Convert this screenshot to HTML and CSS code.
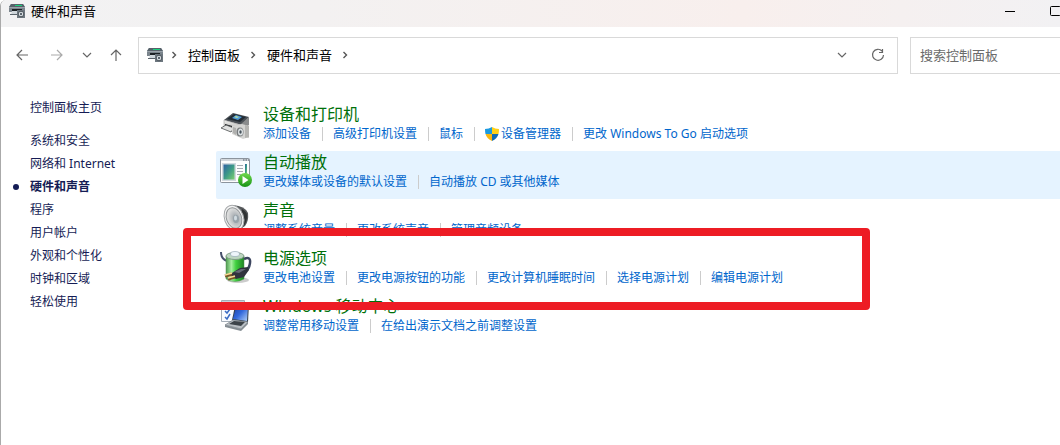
FILE: index.html
```html
<!DOCTYPE html>
<html lang="zh-CN">
<head>
    <meta charset="UTF-8">
    <meta name="viewport" content="width=device-width, initial-scale=1.0">
    <title>硬件和声音</title>
    <link rel="stylesheet" href="styles.css">
</head>
<body>
    <!-- Shared symbols -->
    <svg class="symbols" aria-hidden="true">
        <symbol id="hardware" viewBox="0 0 16 16">
            <path d="M2 1h12l2 3v3H0V4z" fill="#9aa3aa"/>
            <path d="M2 1h12l2 3H0z" fill="#56616a"/>
            <path d="M6 2h7v1H6z" fill="#19d27c"/>
            <path d="M0 5h16v4H0z" fill="#7b858d"/>
            <path d="M3 6h10v2H3z" fill="#1b2024"/>
            <path d="M3 8h6v4H2z" fill="#cfd6db"/>
            <path d="M1 11h7v1H1z" fill="#59636b"/>
            <path d="M8 7h8v8H8z" fill="#6d777f"/>
            <circle cx="12" cy="11" r="2.800" fill="#dfe4e8" stroke="#4b545b"/>
            <circle cx="12" cy="11" r="1.200" fill="#58636b"/>
        </symbol>
        <symbol id="crumb" viewBox="0 0 6 8">
            <path d="M1.500 1l3 3-3 3" fill="none" stroke="#555" stroke-width="1.400"/>
        </symbol>
        <symbol id="down" viewBox="0 0 10 6">
            <path d="M1 1l4 4 4-4" fill="none" stroke="currentColor" stroke-width="1.200"/>
        </symbol>
    </svg>

    <div class="window">
        <header class="titlebar">
            <svg class="icon16"><use href="#hardware"/></svg>
            <h1>硬件和声音</h1>
            <div class="window-buttons">
                <button aria-label="最小化"><svg width="10" height="10" viewBox="0 0 10 10"><path d="M0 5.500h10" stroke="#000"/></svg></button>
                <button aria-label="最大化"><svg width="12" height="10" viewBox="0 0 12 10"><rect x=".5" y=".5" width="10" height="9" rx="1" fill="none" stroke="#000"/></svg></button>
            </div>
        </header>

        <div class="toolbar">
            <nav class="history">
                <button aria-label="后退"><svg width="12" height="12" viewBox="0 0 12 12"><path d="M12 6H1M6 1L1 6l5 5"/></svg></button>
                <button class="disabled" aria-label="前进"><svg width="12" height="12" viewBox="0 0 12 12"><path d="M0 6h11M6 1l5 5-5 5"/></svg></button>
                <button class="narrow" aria-label="最近的位置"><svg width="10" height="6"><use href="#down"/></svg></button>
                <button class="up" aria-label="上移"><svg width="12" height="12" viewBox="0 0 12 12"><path d="M6 12V1M1 6l5-5 5 5"/></svg></button>
            </nav>
            <div class="address">
                <svg class="icon16"><use href="#hardware"/></svg>
                <svg class="crumb"><use href="#crumb"/></svg>
                <a href="#">控制面板</a>
                <svg class="crumb"><use href="#crumb"/></svg>
                <a href="#">硬件和声音</a>
                <svg class="crumb"><use href="#crumb"/></svg>
                <div class="address-buttons">
                    <button aria-label="以前的位置"><svg width="10" height="6"><use href="#down"/></svg></button>
                    <button aria-label="刷新"><svg width="14" height="14" viewBox="0 0 14 14"><path d="M11 3a5.500 5.500 0 1 0 1.500 4M11.500 1v3.500H8"/></svg></button>
                </div>
            </div>
            <input class="search" type="text" placeholder="搜索控制面板" aria-label="搜索控制面板">
        </div>

        <div class="content">
            <nav class="sidebar">
                <a class="home" href="#">控制面板主页</a>
                <a href="#">系统和安全</a>
                <a href="#">网络和 Internet</a>
                <a class="current" href="#">硬件和声音</a>
                <a href="#">程序</a>
                <a href="#">用户帐户</a>
                <a href="#">外观和个性化</a>
                <a href="#">时钟和区域</a>
                <a href="#">轻松使用</a>
            </nav>

            <main class="categories">
                <section class="category">
                    <svg class="icon" viewBox="0 0 40 48">
                        <defs>
                            <linearGradient id="printer" x1="0" y1="0" x2="0" y2="1"><stop offset="0" stop-color="#f4f4f2"/><stop offset="1" stop-color="#a5a5a3"/></linearGradient>
                        </defs>
                        <path d="M4 17l9-7 16 4-7 8z" fill="#4a5056"/>
                        <path d="M7 16l7-5 12 3-6 5z" fill="#222c35"/>
                        <path d="M12 15l4-3 6 2-4 3z" fill="#4f9bd6"/>
                        <path d="M14 14l2-1 3 1-2 1z" fill="#b4dc9c"/>
                        <path d="M4 17l17 5v6L4 24z" fill="url(#printer)" stroke="#888" stroke-width=".5"/>
                        <path d="M21 21l8-7v8l-8 6z" fill="#8a8c8d"/>
                        <path d="M5 21l11 3v3L5 24z" fill="#202326"/>
                        <path d="M1 25l5-3 8 3-3 4z" fill="#e0e1e0" stroke="#4c5052" stroke-width=".8"/>
                        <path d="M12 23l10-2 7 2v12h-3l-3 1-11-5z" fill="#d4d4d2"/>
                        <path d="M25 22l4 1v11l-4 1z" fill="#b5b5b2"/>
                        <path d="M13 24l3 1v7l-3-2z" fill="#b0b0ae"/>
                        <ellipse cx="20" cy="29" rx="3.500" ry="4.500" fill="#777b7d"/>
                        <ellipse cx="20.500" cy="29" rx="2.500" ry="3.500" fill="#dde2e4"/>
                        <ellipse cx="20.500" cy="29" rx="1.200" ry="1.800" fill="#46525a"/>
                    </svg>
                    <div>
                        <h2><a href="#">设备和打印机</a></h2>
                        <ul class="tasks">
                            <li><a href="#">添加设备</a></li>
                            <li><a href="#">高级打印机设置</a></li>
                            <li><a href="#">鼠标</a></li>
                            <li>
                                <a class="admin" href="#">
                                    <svg width="14" height="14" viewBox="0 0 14 14">
                                        <path d="M7 0Q4 2 0 2q0 3 .5 5H7z" fill="#1c9ae0"/>
                                        <path d="M7 0q3 2 7 2 0 3-.5 5H7z" fill="#ffd117"/>
                                        <path d="M.5 7Q2 12 7 14V7z" fill="#f9b712"/>
                                        <path d="M13.500 7Q12 12 7 14V7z" fill="#126cb5"/>
                                    </svg>设备管理器</a>
                            </li>
                            <li><a href="#">更改 Windows To Go 启动选项</a></li>
                        </ul>
                    </div>
                </section>

                <section class="category selected">
                    <svg class="icon" viewBox="0 0 40 48">
                        <defs>
                            <linearGradient id="photo" x1="0" y1="0" x2="1" y2="1"><stop offset="0" stop-color="#2f62a3"/><stop offset=".5" stop-color="#3c9a87"/><stop offset="1" stop-color="#7ed06e"/></linearGradient>
                            <linearGradient id="play" x1="0" y1="0" x2="0" y2="1"><stop offset="0" stop-color="#70d94c"/><stop offset="1" stop-color="#169315"/></linearGradient>
                        </defs>
                        <rect x="0.500" y="7.500" width="29" height="24" rx="1" fill="#fdfdfd" stroke="#8c949d"/>
                        <path d="M1 8h28v2H1z" fill="#d3d8dd"/>
                        <path d="M23 9h1.500M25.500 9H27M28 9h1" stroke="#4e5964"/>
                        <path d="M2 12h14v18H2z" fill="#d0d9df"/>
                        <path d="M3.500 13.500h11v15h-11z" fill="url(#photo)"/>
                        <path d="M17 14.500h6M17 17.500h6M17 20.500h6M17 23.500h4" stroke="#a4aab0"/>
                        <path d="M25 13h2v10h-2z" fill="url(#photo)"/>
                        <circle cx="25" cy="29" r="7" fill="url(#play)"/>
                        <path d="M22.500 25v8l6-4z" fill="#fff"/>
                    </svg>
                    <div>
                        <h2><a href="#">自动播放</a></h2>
                        <ul class="tasks">
                            <li><a href="#">更改媒体或设备的默认设置</a></li>
                            <li><a href="#">自动播放 CD 或其他媒体</a></li>
                        </ul>
                    </div>
                </section>

                <section class="category">
                    <svg class="icon" viewBox="0 0 40 48">
                        <defs>
                            <radialGradient id="cone" cx=".6" cy=".55"><stop offset="0" stop-color="#8a939a"/><stop offset=".5" stop-color="#b9bdc0"/><stop offset="1" stop-color="#dcdddd"/></radialGradient>
                        </defs>
                        <path d="M13 6q12 1 15 8 1 8-3 13l-8 5z" fill="#55585a"/>
                        <path d="M22 10q6 3 5 9t-5 10z" fill="#303334"/>
                        <ellipse cx="14" cy="19" rx="9.500" ry="13" transform="rotate(-20 14 19)" fill="#f4f4f4" stroke="#a5a8aa"/>
                        <ellipse cx="14" cy="19" rx="7.500" ry="10.500" transform="rotate(-20 14 19)" fill="url(#cone)" stroke="#8f9395"/>
                        <ellipse cx="16" cy="20" rx="3" ry="4" fill="#98a3ab"/>
                        <ellipse cx="15.500" cy="19" rx="1.500" ry="2.500" fill="#d1dbe1"/>
                    </svg>
                    <div>
                        <h2><a href="#">声音</a></h2>
                        <ul class="tasks">
                            <li><a href="#">调整系统音量</a></li>
                            <li><a href="#">更改系统声音</a></li>
                            <li><a href="#">管理音频设备</a></li>
                        </ul>
                    </div>
                </section>

                <section class="category highlighted">
                    <svg class="icon" viewBox="0 0 40 48">
                        <defs>
                            <linearGradient id="battery"><stop offset="0" stop-color="#4f9a50"/><stop offset=".3" stop-color="#a6efa0"/><stop offset=".55" stop-color="#40d03f"/><stop offset="1" stop-color="#208425"/></linearGradient>
                        </defs>
                        <ellipse cx="18" cy="33" rx="11" ry="3" fill="#ccc"/>
                        <path d="M1 5q0 7 6 9" fill="none" stroke="#46506b" stroke-width="2"/>
                        <path d="M6 9v23q9 5 18 0V9z" fill="url(#battery)" stroke="#579355" stroke-width=".5"/>
                        <ellipse cx="15" cy="9" rx="9" ry="3.500" fill="#bcd6c0" stroke="#829b88"/>
                        <ellipse cx="15" cy="7" rx="4.500" ry="2.500" fill="#eef5fa" stroke="#9aabb7" stroke-width=".7"/>
                        <path d="M24 12q7-3 6 4t-5 8" fill="none" stroke="#3c455f" stroke-width="2.500"/>
                        <path d="M12 26l8-5 8-1 1 3-5 7-8 2-5-3z" fill="#30333d"/>
                        <path d="M14 25l7-3 5 0-7 4z" fill="#656976"/>
                        <path d="M12 27l-7 2M15 30l-7 2" stroke="#7b5427" stroke-width="3"/>
                        <path d="M12 26l-7 2M15 29l-7 2" stroke="#f4dc94" stroke-width="1.500"/>
                    </svg>
                    <div>
                        <h2><a href="#">电源选项</a></h2>
                        <ul class="tasks">
                            <li><a href="#">更改电池设置</a></li>
                            <li><a href="#">更改电源按钮的功能</a></li>
                            <li><a href="#">更改计算机睡眠时间</a></li>
                            <li><a href="#">选择电源计划</a></li>
                            <li><a href="#">编辑电源计划</a></li>
                        </ul>
                    </div>
                </section>

                <section class="category">
                    <svg class="icon" viewBox="0 0 40 48">
                        <defs>
                            <linearGradient id="screen" x1="0" y1="0" x2="1" y2="1"><stop offset="0" stop-color="#1c3b9b"/><stop offset=".5" stop-color="#3268dc"/><stop offset="1" stop-color="#b5d3f7"/></linearGradient>
                        </defs>
                        <path d="M1.500 5.500h23v21h-23z" fill="#fafcff" stroke="#a5aeb8"/>
                        <path d="M2 6h22v3H2z" fill="#c8d0d8"/>
                        <path d="M5 16l2 2 3-4M5 22l2 2 3-5" fill="none" stroke="#3a6bc4" stroke-width="1.500"/>
                        <path d="M15 11l14-2-1 18-16-2z" fill="#35404d"/>
                        <path d="M16 12l12-2-1 16-14-2z" fill="url(#screen)"/>
                        <path d="M5 30l8-5 15 2-7 7z" fill="#b9bfc4" stroke="#777f86" stroke-width=".7"/>
                        <path d="M9 29l5-3 11 1-4 4z" fill="#3d444a"/>
                        <path d="M5 30l16 4 7-7v2l-7 7L5 32z" fill="#858d93"/>
                    </svg>
                    <div>
                        <h2><a href="#">Windows 移动中心</a></h2>
                        <ul class="tasks">
                            <li><a href="#">调整常用移动设置</a></li>
                            <li><a href="#">在给出演示文档之前调整设置</a></li>
                        </ul>
                    </div>
                </section>
            </main>
        </div>
    </div>
</body>
</html>
```
FILE: styles.css
```css
*, *::before, *::after {
    box-sizing: border-box;
}
body {
    margin: 0;
    overflow: hidden;
    background-color: #fff;
    font-family: "Noto Sans", "Noto Sans CJK SC", sans-serif;
    font-size: 12px;
    line-height: 16px;
}
h1, h2, ul {
    margin: 0;
    padding: 0;
    font-weight: normal;
}
a {
    text-decoration: none;
}
svg {
    display: block;
    flex-shrink: 0;
}
button {
    display: flex;
    align-items: center;
    justify-content: center;
    padding: 0;
    border: none;
    background: none;
    color: #666;
}
button path {
    fill: none;
    stroke: #666;
    stroke-width: 1.2;
}
.symbols {
    position: absolute;
    width: 0;
    height: 0;
}
.icon16 {
    width: 16px;
    height: 16px;
}
.window {
    min-height: 100vh;
    border-left: 1px solid #aaa;
    border-top-left-radius: 6px;
    overflow: hidden;
}

/* Title bar */
.titlebar {
    display: flex;
    align-items: center;
    height: 27px;
    padding: 0 0 5px 8px;
    gap: 6px;
    background: linear-gradient(90deg, #f2f2f3, #f3f1f1 30%, #f8efed 70%, #f2f1f3);
}
.titlebar h1 {
    font-size: 13px;
    line-height: 16px;
}
.window-buttons {
    display: flex;
    margin-left: auto;
    margin-right: -19px;
}
.window-buttons button {
    width: 46px;
    height: 22px;
}
.window-buttons path {
    stroke: #000;
    stroke-width: 1;
}

/* Navigation and address */
.toolbar {
    display: flex;
    align-items: center;
    padding-top: 10px;
}
.history {
    display: flex;
    width: 137px;
    padding: 0 0 2px 3px;
}
.history button {
    width: 35px;
    height: 24px;
}
.history .narrow {
    width: 25px;
}
.history .up {
    width: 34px;
}
.history .disabled path {
    stroke: #aaa;
}
.address {
    display: flex;
    flex: 1;
    align-items: center;
    height: 37px;
    padding: 0 7px 2px 8px;
    border: 1px solid #d9d9d9;
    font-size: 13px;
}
.address a {
    color: #000;
}
.crumb {
    width: 6px;
    height: 8px;
    margin: 0 11px 0 10px;
}
.icon16 + .crumb {
    margin-left: 8px;
}
.address-buttons {
    display: flex;
    margin-left: auto;
}
.address-buttons button {
    width: 37px;
    height: 24px;
}
.address-buttons button:last-child {
    width: 24px;
    margin-left: 6px;
}
.search {
    width: 150px;
    height: 37px;
    margin-left: 12px;
    padding: 0 9px 2px;
    border: 1px solid #d9d9d9;
    border-right: none;
    border-radius: 0;
    font: inherit;
    font-size: 13px;
}
.search::placeholder {
    color: #6b6b6b;
}

/* Page content */
.content {
    display: flex;
}
.sidebar {
    display: flex;
    flex-direction: column;
    width: 215px;
    padding: 22px 0 0 29px;
    line-height: 23px;
}
.sidebar a {
    color: #151c55;
}
.sidebar .home {
    margin-bottom: 10px;
}
.sidebar .current {
    display: flex;
    align-items: center;
    gap: 11px;
    margin-left: -17px;
    font-weight: bold;
}
.sidebar .current::before {
    content: "";
    width: 6px;
    height: 6px;
    border-radius: 50%;
    background-color: #151c55;
}
.categories {
    flex: 1;
    padding-top: 29px;
}
.category {
    display: flex;
    height: 48px;
    padding-left: 4px;
    gap: 3px;
}
.category.selected {
    background-color: #e5f3ff;
    border-radius: 2px 0 0 2px;
}
.category .icon {
    width: 40px;
    height: 48px;
}
.category h2 {
    font-size: 16px;
    line-height: 22px;
}
.category h2 a {
    color: #00700a;
}
.tasks {
    display: flex;
    line-height: 18px;
    list-style: none;
}
.tasks li {
    display: flex;
    align-items: center;
    white-space: nowrap;
}
.tasks li + li::before {
    content: "";
    width: 1px;
    height: 14px;
    margin: 0 10px 0 11px;
    background-color: #ccc;
}
.tasks a {
    color: #0066cc;
}
.tasks .admin {
    display: flex;
    align-items: center;
    gap: 2px;
}

/* Marker frame around the power options */
.highlighted {
    position: relative;
}
.highlighted::after {
    content: "";
    position: absolute;
    top: -19px;
    bottom: -15px;
    left: -33px;
    width: 687px;
    border: 8px solid #ed1c24;
    border-radius: 4px;
    pointer-events: none;
}
```
